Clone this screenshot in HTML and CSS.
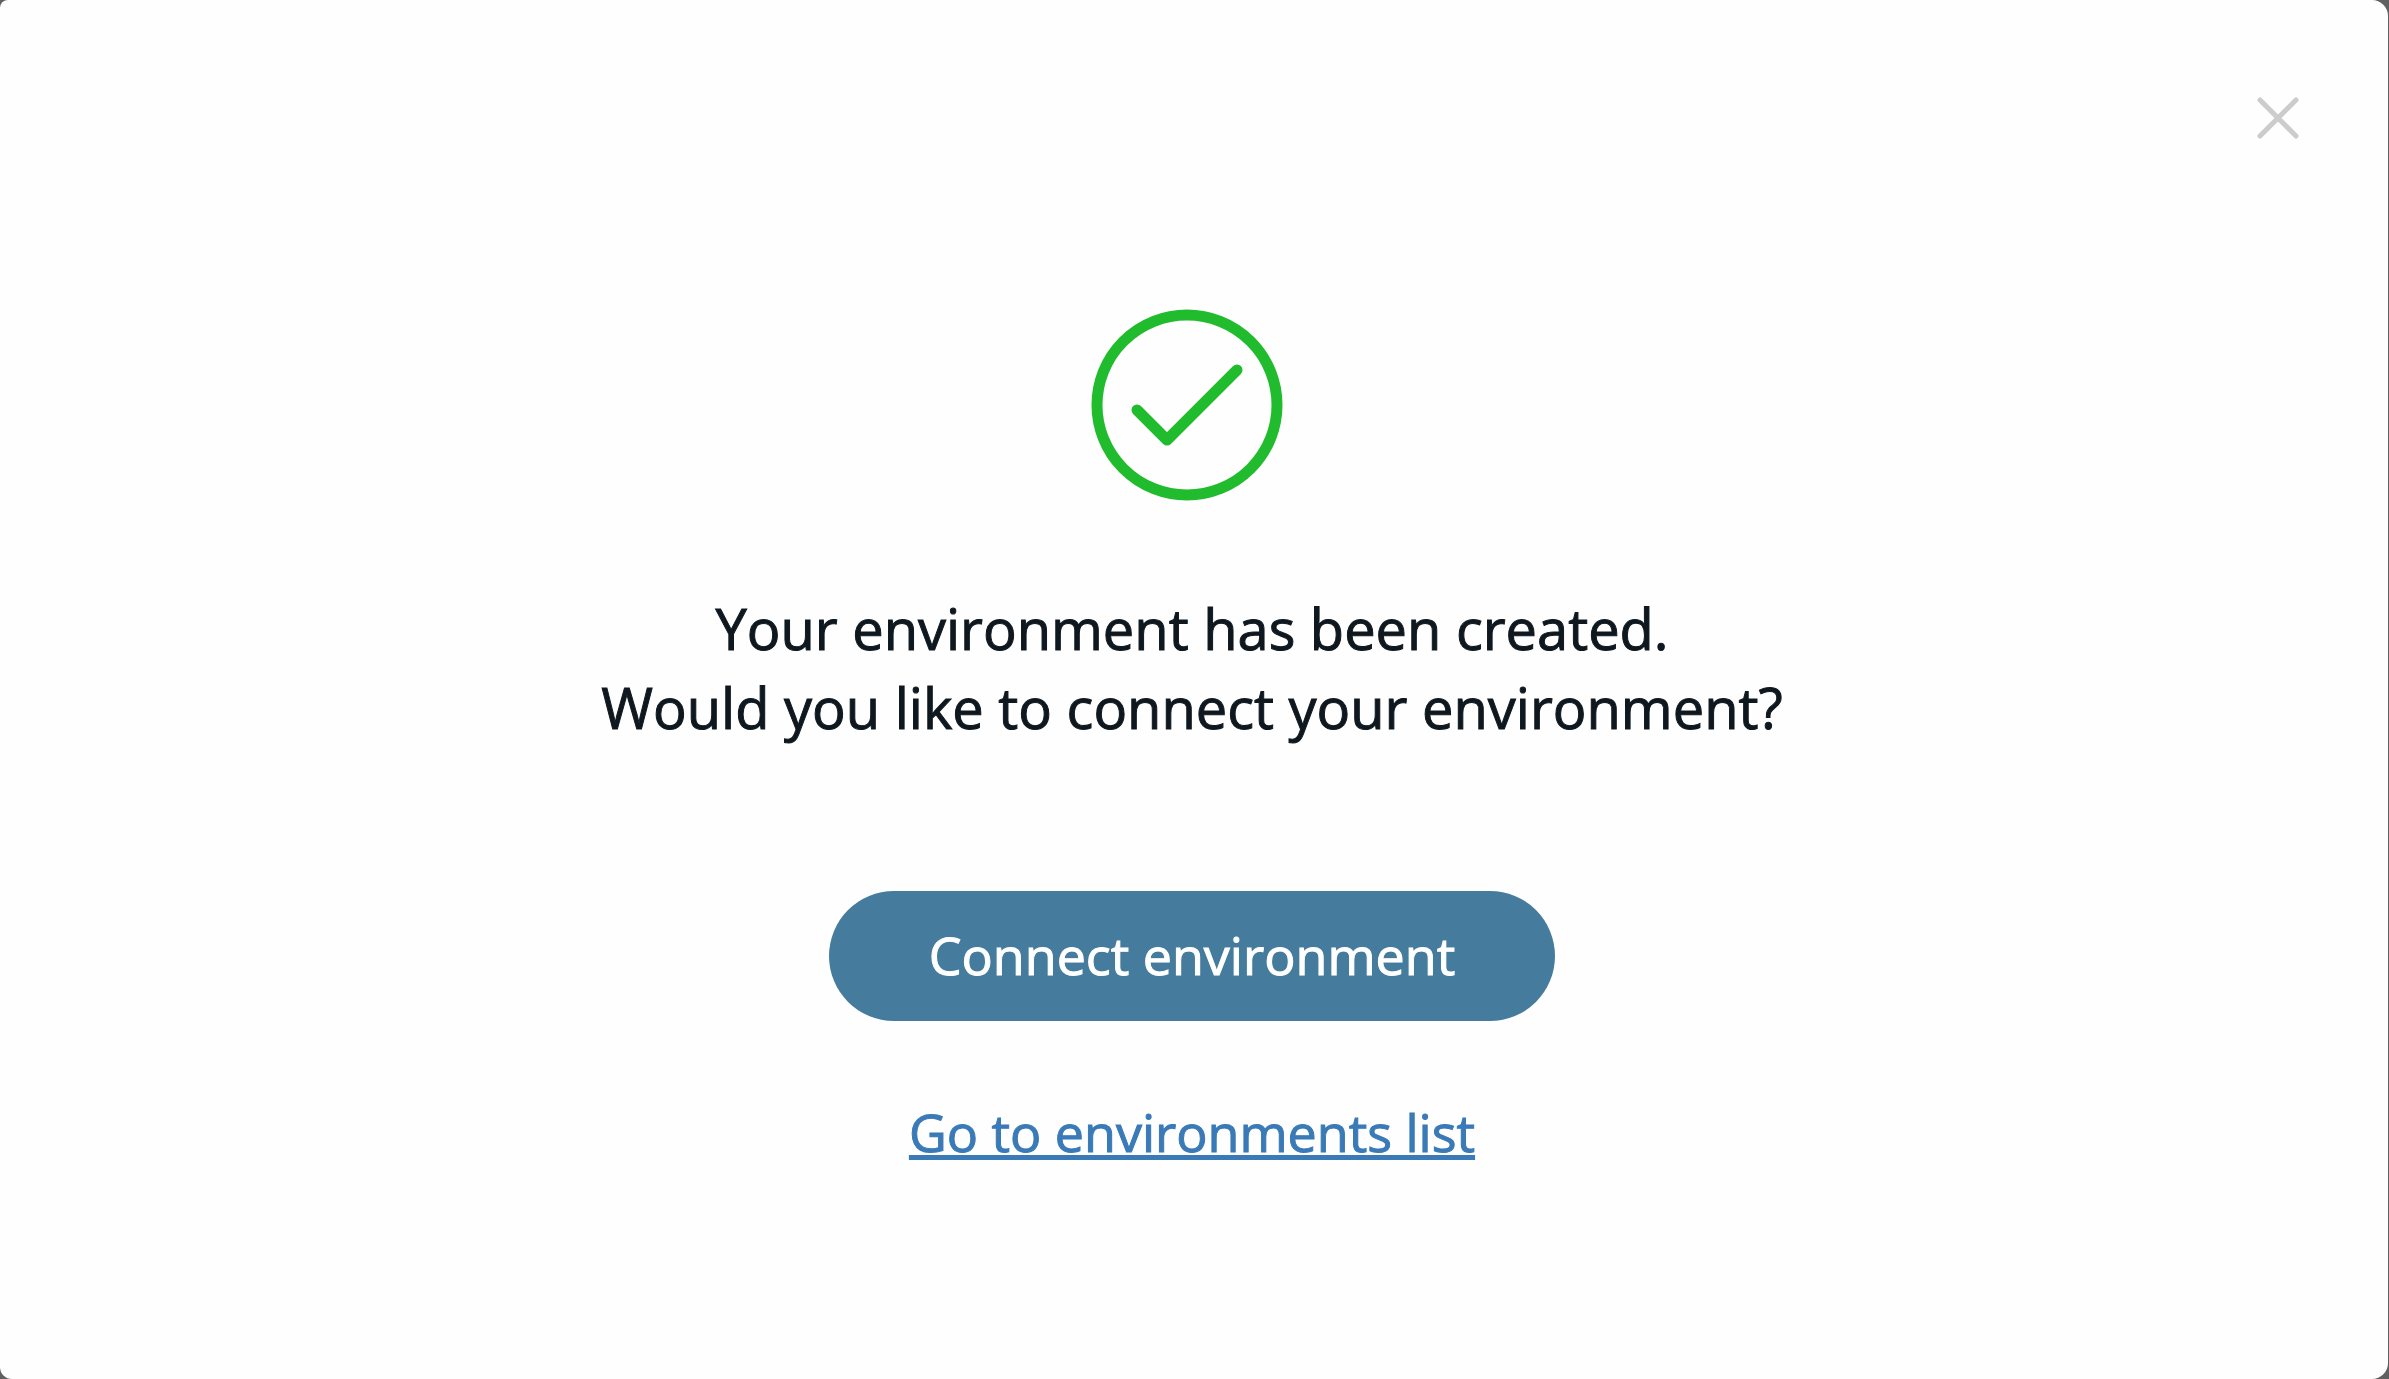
FILE: index.html
```html
<!DOCTYPE html>
<html lang="en">
<head>
  <meta charset="utf-8">
  <meta name="viewport" content="width=device-width, initial-scale=1">
  <title>Environment created</title>
  <link rel="stylesheet" href="styles.css">
</head>
<body>
  <main class="dialog" role="dialog" aria-labelledby="dialog-message">
    <header class="dialog-header">
      <button class="close" type="button" aria-label="Close">
        <svg class="close-icon" viewBox="0 0 44 44" aria-hidden="true">
          <path d="M4 4 40 40M40 4 4 40"/>
        </svg>
      </button>
    </header>
    <div class="dialog-body">
      <svg class="success-icon" viewBox="0 0 192 192" aria-hidden="true">
        <circle cx="96" cy="96" r="90"/>
        <path d="M46 101 76 131 146 61"/>
      </svg>
      <p class="message" id="dialog-message">Your environment has been created.<br>Would you like to connect your environment?</p>
      <button class="connect" type="button">Connect environment</button>
      <a class="list-link" href="#environments">Go to environments list</a>
    </div>
  </main>
</body>
</html>
```
FILE: styles.css
```css
* {
  box-sizing: border-box;
}

body {
  margin: 0;
  background: #606060;
  font-family: "Open Sans", "Noto Sans", sans-serif;
  -webkit-text-stroke: 1px;
}

.dialog {
  min-height: 100vh;
  margin-right: 1px;
  padding: 96px 84px 96px 80px;
  background: #fefefe;
  border-radius: 8px 16px 16px 12px;
}

.dialog-header {
  display: flex;
  justify-content: flex-end;
  padding-right: 4px;
}

.close {
  display: flex;
  padding: 0;
  border: 0;
  background: none;
  cursor: pointer;
}

.close-icon {
  width: 44px;
  height: 44px;
  fill: none;
  stroke: #ccc;
  stroke-width: 5;
  stroke-linecap: round;
}

.dialog-body {
  display: flex;
  flex-direction: column;
  align-items: center;
  padding-top: 169px;
}

.success-icon {
  width: 192px;
  height: 192px;
  margin-right: 10px;
  fill: none;
  stroke: #21bc2e;
  stroke-width: 11;
  stroke-linecap: round;
  stroke-linejoin: round;
}

.message {
  margin: 88px 0 144px;
  color: #0f181f;
  font-size: 56px;
  line-height: 79px;
  text-align: center;
}

.connect {
  padding: 28px 100px 30px;
  border: 0;
  border-radius: 65px;
  background: #457c9d;
  color: #fff;
  font: inherit;
  font-size: 52px;
  line-height: 72px;
  cursor: pointer;
}

.list-link {
  margin-top: 75px;
  color: #397ab7;
  font-size: 52px;
  line-height: 72px;
  text-decoration-thickness: 5px;
  text-underline-offset: 3px;
  text-decoration-skip-ink: none;
}
```
